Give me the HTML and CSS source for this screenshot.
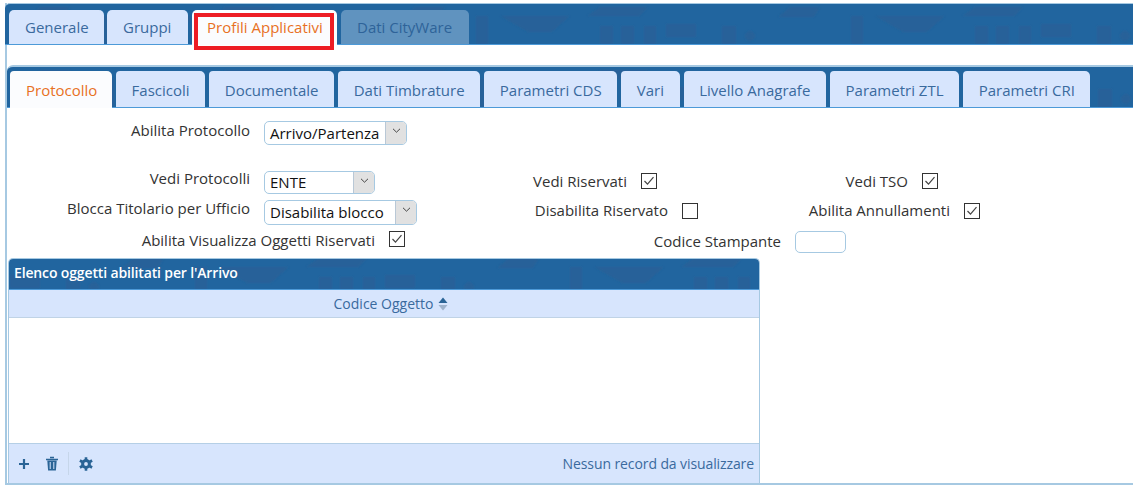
FILE: index.html
```html
<!DOCTYPE html>
<html lang="it">
<head>
<meta charset="utf-8">
<title>Profili Applicativi</title>
<link rel="stylesheet" href="styles.css">
</head>
<body>
<div class="panel">
  <nav class="bar outer-bar">
    <a class="tab">Generale</a>
    <a class="tab">Gruppi</a>
    <a class="tab active marked">Profili Applicativi</a>
    <a class="tab disabled">Dati CityWare</a>
  </nav>
  <div class="outer-body">
    <nav class="bar inner-bar">
      <a class="tab active">Protocollo</a>
      <a class="tab">Fascicoli</a>
      <a class="tab">Documentale</a>
      <a class="tab">Dati Timbrature</a>
      <a class="tab">Parametri CDS</a>
      <a class="tab">Vari</a>
      <a class="tab">Livello Anagrafe</a>
      <a class="tab">Parametri ZTL</a>
      <a class="tab">Parametri CRI</a>
    </nav>
    <form class="form">
      <div class="row row-1">
        <label class="lbl w-a">Abilita Protocollo</label>
        <span class="select s-arrivo"><span class="val">Arrivo/Partenza</span><span class="arrow"><svg width="9" height="5" viewBox="0 0 9 5"><path d="M1 .8l3.5 3.4L8 .8" fill="none" stroke="#444" stroke-width="1"/></svg></span></span>
      </div>
      <div class="row row-2">
        <label class="lbl w-a">Vedi Protocolli</label>
        <span class="select s-ente"><span class="val">ENTE</span><span class="arrow"><svg width="9" height="5" viewBox="0 0 9 5"><path d="M1 .8l3.5 3.4L8 .8" fill="none" stroke="#444" stroke-width="1"/></svg></span></span>
        <label class="lbl w-b1">Vedi Riservati</label>
        <span class="check"><svg width="12" height="10" viewBox="0 0 12 10"><path d="M1.5 5l3 3.2 6-7" fill="none" stroke="#444" stroke-width="1.2"/></svg></span>
        <label class="lbl w-c1">Vedi TSO</label>
        <span class="check"><svg width="12" height="10" viewBox="0 0 12 10"><path d="M1.5 5l3 3.2 6-7" fill="none" stroke="#444" stroke-width="1.2"/></svg></span>
      </div>
      <div class="row row-3">
        <label class="lbl w-a">Blocca Titolario per Ufficio</label>
        <span class="select s-blocco"><span class="val">Disabilita blocco</span><span class="arrow"><svg width="9" height="5" viewBox="0 0 9 5"><path d="M1 .8l3.5 3.4L8 .8" fill="none" stroke="#444" stroke-width="1"/></svg></span></span>
        <label class="lbl w-b2">Disabilita Riservato</label>
        <span class="check"></span>
        <label class="lbl w-c2">Abilita Annullamenti</label>
        <span class="check"><svg width="12" height="10" viewBox="0 0 12 10"><path d="M1.5 5l3 3.2 6-7" fill="none" stroke="#444" stroke-width="1.2"/></svg></span>
      </div>
      <div class="row row-4">
        <label class="lbl w-d">Abilita Visualizza Oggetti Riservati</label>
        <span class="check"><svg width="12" height="10" viewBox="0 0 12 10"><path d="M1.5 5l3 3.2 6-7" fill="none" stroke="#444" stroke-width="1.2"/></svg></span>
        <label class="lbl w-e">Codice Stampante</label>
        <span class="text-input"></span>
      </div>
    </form>
    <section class="grid-box">
      <header class="caption">Elenco oggetti abilitati per l'Arrivo</header>
      <div class="col-head">
        <span>Codice Oggetto</span>
        <svg class="sort" width="10" height="14" viewBox="0 0 10 14"><path d="M5 .5L9.5 6H.5z" fill="#2a6496"/><path d="M.5 8h9L5 13.5z" fill="#9fb3cc"/></svg>
      </div>
      <div class="grid-body"></div>
      <footer class="pager">
        <div class="tools">
          <svg class="ic" width="12" height="12" viewBox="0 0 12 12"><path d="M6 1v10M1 6h10" stroke="#2a6496" stroke-width="2.2" fill="none"/></svg>
          <svg class="ic trash" width="14" height="15" viewBox="0 0 14 15"><path d="M5 1.5h4M1 3.5h12" stroke="#2a6496" stroke-width="1.6" fill="none"/><path d="M2.3 4.5h9.4l-.8 10H3.1z" fill="#2a6496"/><path d="M5.2 6v7M8.8 6v7" stroke="#d6e4fd" stroke-width="1"/></svg>
          <span class="sep"></span>
          <svg class="ic gear" width="14" height="14" viewBox="0 0 14 14"><circle cx="7" cy="7" r="3.4" fill="none" stroke="#2a6496" stroke-width="3"/><path d="M7 .3v3M7 10.7v3M.9 3.5l2.6 1.5M10.5 9l2.6 1.5M.9 10.5L3.5 9M10.5 5l2.6-1.5" stroke="#2a6496" stroke-width="2.6"/></svg>
        </div>
        <span class="records">Nessun record da visualizzare</span>
      </footer>
    </section>
  </div>
</div>
</body>
</html>
```
FILE: styles.css
```css
* { box-sizing: border-box; }
html, body { margin: 0; height: 100%; background: #fff; overflow: hidden; }
body { padding: 3px 0 0 5px; font: 15px/20px "Open Sans", sans-serif; color: #333; }
.panel { height: 482px; border-left: 2px solid #a6c9e2; border-bottom: 2px solid #a6c9e2; }
.bar, .caption {
  background-color: #21659f;
  background-image: url("data:image/svg+xml,%3Csvg xmlns='http://www.w3.org/2000/svg' width='375' height='41'%3E%3Cdefs%3E%3Cfilter id='b'%3E%3CfeGaussianBlur stdDeviation='1'/%3E%3C/filter%3E%3C/defs%3E%3Cg fill='%23365a8c' fill-opacity='.32' filter='url(%23b)'%3E%3Cpath d='M140 3h48l-8 9h-53zM40 12h70L92 28H68zM330 3h30l-6 10h-36z'/%3E%3Crect x='16' y='12' width='12' height='28'/%3E%3Crect x='140' y='22' width='13' height='18'/%3E%3Crect x='161' y='22' width='13' height='18'/%3E%3Crect x='184' y='22' width='12' height='18'/%3E%3Crect x='206' y='20' width='30' height='13'/%3E%3Ccircle cx='290' cy='32' r='5'/%3E%3Crect x='262' y='22' width='14' height='18'/%3E%3C/g%3E%3C/svg%3E");
  background-repeat: repeat-x;
}
.bar {
  display: flex; gap: 4px; align-items: flex-end;
  border-bottom: 1px solid #4d9ad8;
}
.outer-bar {
  height: 42px; padding-left: 4px; margin-left: -2px;
  border-top: 1px solid #a6c9e2; border-radius: 5px 0 0 0;
  background-position: 80px 0;
}
.inner-bar {
  height: 43px; padding-left: 3px; margin: 20px 0 0 0;
  border-top: 2px solid #a6c9e2; border-top-left-radius: 6px;
  background-position: 79px 0;
}
.tab {
  height: 35px; padding: 7px 16px 0; color: #3a6a9e; background: #d7e5fd;
  border-radius: 5px 5px 0 0; white-space: nowrap; margin-bottom: -1px;
  border-bottom: 1px solid #4d9ad8; flex: none;
}
.inner-bar .tab { height: 37px; padding: 9px 15.6px 0; border-top-left-radius: 4px; }
.tab.active { background: #fbfcfe; color: #e8711f; border-bottom-color: #fbfcfe; }
.inner-bar .tab.active { width: 102px; padding-left: 16px; }
.tab.disabled { background: #6093bf; color: #2e6399; }
.outer-bar .tab:nth-child(1) { width: 95px; }
.outer-bar .tab:nth-child(2) { width: 81px; margin-left: -1px; }
.outer-bar .tab:nth-child(3) { width: 145px; position: relative; padding-left: 15px; }
.outer-bar .tab:nth-child(4) { width: 128px; }
.marked::after {
  content: ""; position: absolute; left: 2px; top: 3px; width: 140px; height: 37px;
  box-sizing: border-box; border: 4px solid #ed1c24;
}
.form { padding-top: 12px; height: 150px; }
.row { display: flex; align-items: center; color: #333; }
.row-1 { height: 26px; }
.row-2 { height: 24px; margin-top: 24px; }
.row-3 { height: 26px; margin-top: 5px; }
.row-4 { height: 24px; margin-top: 3px; }
.lbl { text-align: right; flex: none; margin-top: -4px; white-space: nowrap; }
.w-a { width: 243px; margin-right: 14px; margin-top: -6px; }
.row-2 .w-a, .row-3 .w-a { margin-top: -8px; }
.w-b1 { width: 252px; margin-right: 14px; margin-top: -3px; }
.w-c1 { width: 251px; margin-right: 14px; margin-top: -3px; }
.w-b2 { width: 251px; margin-right: 14px; }
.w-c2 { width: 252px; margin-right: 14px; }
.w-d { width: 368px; margin-right: 14px; margin-top: -1px; }
.w-e { width: 376px; margin-right: 14px; margin-top: 1px; }
.select {
  display: flex; flex: none; border: 1px solid #a6c9e2; border-radius: 5px;
  overflow: hidden; color: #111; background: #fff; line-height: 22px;
}
.val { flex: 1; padding: 0 0 0 5px; white-space: nowrap; }
.arrow {
  width: 21px; flex: none; background: #e1e1e1; border-left: 1px solid #b9c8d6;
  display: flex; justify-content: center; padding-top: 6px;
}
.s-arrivo { width: 143px; height: 24px; }
.s-ente { width: 111px; height: 23px; line-height: 20px; }
.s-blocco { width: 153px; height: 25px; }
.check {
  width: 16px; height: 16px; flex: none; border: 1px solid #333; background: #fff;
  display: flex; align-items: center; justify-content: center;
  margin-top: -2px;
}
.text-input { width: 51px; height: 22px; border: 1px solid #a6c9e2; border-radius: 5px; margin-top: 3px; flex: none; }
.grid-box { width: 752px; margin-left: 1px; height: 225px; display: flex; flex-direction: column; border-right: 1px solid #a6c9e2; border-top: 1px solid #a6c9e2; border-left: 1px solid #a6c9e2; border-radius: 5px 5px 0 0; }
.caption {
  height: 31px; padding: 4px 0 0 5px; color: #fff; font-weight: 600; font-size: 14px; letter-spacing: -.14px;
  border-radius: 4px 4px 0 0;
  background-position: 170px -4px;
  border-bottom: 1px solid #4d9ad8;
}
.col-head {
  height: 28px; display: flex; justify-content: center; align-items: center; gap: 5px; padding-left: 14px;
  background: #d7e5fd; color: #3a6a9e; border-bottom: 1px solid #c0d3e6; font-size: 14px;
}
.grid-body { flex: 1; background: #fff; }
.pager {
  height: 40px; display: flex; align-items: center; justify-content: space-between; padding: 0 5px 0 9px;
  background: #d7e5fd; border-top: 1px solid #b5cfe6; color: #3a6a9e; font-size: 14px; letter-spacing: -.1px;
}
.tools { display: flex; align-items: center; }
.ic.trash { margin-left: 15px; }
.sep { width: 1px; height: 23px; margin: 0 10px 0 9px; background: #c6d6ea; }
```
